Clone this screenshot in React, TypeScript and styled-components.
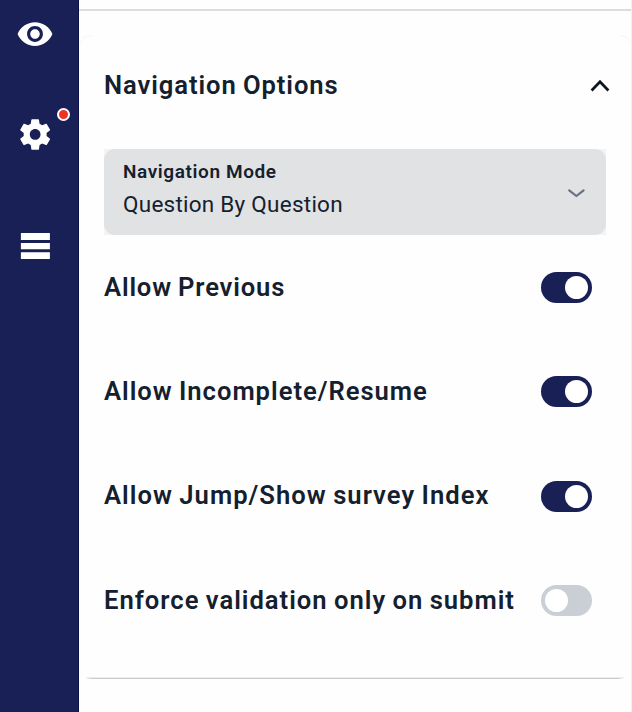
import React, { useState } from "react";
import styled, { createGlobalStyle } from "styled-components";

const NAVY = "#192056";
const INK = "#15202e";

const GlobalStyle = createGlobalStyle`
  * { box-sizing: border-box; }
  body { margin: 0; background: #fefefe; overflow: hidden; }
  button { border: 0; padding: 0; background: none; font: inherit; color: inherit; cursor: pointer; text-align: left; }
  svg { display: block; }
`;

const Page = styled.div`
  display: flex;
  width: 632px;
  height: 712px;
  overflow: hidden;
  font-family: Roboto, "Liberation Sans", sans-serif;
  color: ${INK};
`;

const Sidebar = styled.nav`
  width: 79px;
  flex: none;
  padding: 15px 8px 0 0;
  display: flex;
  flex-direction: column;
  align-items: center;
  background: ${NAVY};
  border-right: 1px solid #0b1048;
`;

const SideButton = styled.button<{ $gap?: number }>`
  position: relative;
  width: 38px;
  height: 38px;
  margin-bottom: ${(p) => p.$gap ?? 0}px;
  color: #fff;
`;

const Dot = styled.span`
  position: absolute;
  left: 41px;
  top: -7px;
  width: 13px;
  height: 13px;
  border-radius: 50%;
  border: 2px solid #fff;
  background: #f2311f;
`;

const Main = styled.main`
  flex: 1;
  min-width: 0;
  display: flex;
  flex-direction: column;
  border-right: 1px solid #f1f1f4;
`;

const TopRule = styled.div`
  height: 11px;
  flex: none;
  border-bottom: 2px solid #dcdcdc;
  margin-bottom: 24px;
`;

const CardCorners = styled.div`
  display: flex;
  justify-content: space-between;
  height: 10px;
  flex: none;
  padding: 0 0 0 1px;
`;

const Corner = styled.span<{ $side: "left" | "right" }>`
  width: 11px;
  height: 10px;
  border-top: 1px solid #f4f4f4;
  border-${(p) => p.$side}: 1px solid #f8f8f8;
  border-top-${(p) => p.$side}-radius: 11px;
`;

const Card = styled.section`
  height: 632px;
  flex: none;
  padding: 20px 17px 0;
  margin: 0 7px 0 8px;
  display: flex;
  flex-direction: column;
`;

const CardEdge = styled.div`
  height: 2px;
  flex: none;
  margin: 0 7px 0 7px;
  background: linear-gradient(to right, transparent, #cbcbcb 6px, #cbcbcb calc(100% - 6px), transparent);
  border-top: 1px solid #ededed;
`;

const CardHeader = styled.button`
  display: flex;
  align-items: center;
  justify-content: space-between;
  width: 506px;
  height: 42px;
  margin-bottom: 42px;
`;

const Label = styled.span<{ $spacing: number }>`
  padding-bottom: 2px;
  font-size: 25.6px;
  line-height: 30px;
  font-weight: 600;
  letter-spacing: ${(p) => p.$spacing}px;
  word-spacing: -1px;
  white-space: nowrap;
`;

const SelectFrame = styled.div`
  width: 502px;
  height: 86px;
  flex: none;
  background: #f4f4f4;
`;

const Select = styled.button`
  display: flex;
  align-items: center;
  justify-content: space-between;
  width: 100%;
  height: 100%;
  padding: 0 20px 0 19px;
  border-radius: 11px;
  background: #e1e2e4;
`;

const SelectText = styled.span`
  display: flex;
  flex-direction: column;
  white-space: nowrap;
  padding-bottom: 4px;
`;

const SelectCaption = styled.span`
  font-size: 19px;
  line-height: 28px;
  font-weight: 600;
  letter-spacing: 0.6px;
`;

const SelectValue = styled.span`
  font-size: 22.5px;
  line-height: 36px;
  font-weight: 400;
  letter-spacing: 0.25px;
`;

const Options = styled.div`
  padding-top: 37px;
  display: flex;
  flex-direction: column;
  gap: 73.4px;
`;

const OptionRow = styled.div`
  display: flex;
  align-items: center;
  justify-content: space-between;
  width: 488px;
  height: 31px;
`;

const Track = styled.button<{ $on: boolean }>`
  display: flex;
  align-items: center;
  justify-content: ${(p) => (p.$on ? "flex-end" : "flex-start")};
  width: 51.5px;
  height: 31px;
  flex: none;
  padding: 0 4px;
  border-radius: 16px;
  background: ${(p) => (p.$on ? NAVY : "#cacfd6")};
`;

const Knob = styled.span`
  width: 23px;
  height: 23px;
  border-radius: 50%;
  background: #fff;
`;

const EyeIcon = () => (
  <svg width="38" height="38" viewBox="0 0 24 24" fill="currentColor">
    <path d="M12 4.5C7 4.5 2.73 7.61 1 12c1.73 4.39 6 7.5 11 7.5s9.27-3.11 11-7.5c-1.73-4.39-6-7.5-11-7.5zM12 17c-2.76 0-5-2.24-5-5s2.24-5 5-5 5 2.24 5 5-2.24 5-5 5zm0-8c-1.66 0-3 1.34-3 3s1.34 3 3 3 3-1.34 3-3-1.34-3-3-3z" />
  </svg>
);

const GearIcon = () => (
  <svg width="38" height="38" viewBox="-0.5 -0.7 24.8 24.8" fill="currentColor">
    <path d="M19.43 12.98c.04-.32.07-.64.07-.98s-.03-.66-.07-.98l2.11-1.65c.19-.15.24-.42.12-.64l-2-3.46c-.12-.22-.39-.3-.61-.22l-2.49 1c-.52-.4-1.08-.73-1.69-.98l-.38-2.65C14.46 2.18 14.25 2 14 2h-4c-.25 0-.46.18-.49.42l-.38 2.65c-.61.25-1.17.59-1.69.98l-2.49-1c-.23-.09-.49 0-.61.22l-2 3.46c-.13.22-.07.49.12.64l2.11 1.65c-.04.32-.07.65-.07.98s.03.66.07.98l-2.11 1.65c-.19.15-.24.42-.12.64l2 3.46c.12.22.39.3.61.22l2.49-1c.52.4 1.08.73 1.69.98l.38 2.65c.03.24.24.42.49.42h4c.25 0 .46-.18.49-.42l.38-2.65c.61-.25 1.17-.59 1.69-.98l2.49 1c.23.09.49 0 .61-.22l2-3.46c.12-.22.07-.49-.12-.64l-2.11-1.65zM12 15.5c-1.93 0-3.5-1.57-3.5-3.5s1.57-3.5 3.5-3.5 3.5 1.57 3.5 3.5-1.57 3.5-3.5 3.5z" />
  </svg>
);

const BarsIcon = () => (
  <svg width="38" height="38" viewBox="0 0 38 38" fill="currentColor">
    <path d="M4.9 6h29v7h-29zM4.9 16h29v6.3h-29zM4.9 25.3h29v6.7h-29z" />
  </svg>
);

const ChevronUp = () => (
  <svg width="20" height="14" viewBox="0 0 20 14" fill="none" stroke="#0d151f" strokeWidth="2.7">
    <path d="M1.6 11.5 10 2.8l8.4 8.7" />
  </svg>
);

const ChevronDown = () => (
  <svg width="20" height="12" viewBox="0 0 20 12" fill="none" stroke="#66717f" strokeWidth="2.2" strokeLinecap="round" strokeLinejoin="round">
    <path d="M3.2 4.4 10.4 10l7.2-5.6" />
  </svg>
);

const initialOptions = [
  { label: "Allow Previous", spacing: 0.83, on: true },
  { label: "Allow Incomplete/Resume", spacing: 0.98, on: true },
  { label: "Allow Jump/Show survey Index", spacing: 1.03, on: true },
  { label: "Enforce validation only on submit", spacing: 1, on: false },
];

export default function App() {
  const [options, setOptions] = useState(initialOptions);
  const toggle = (i: number) =>
    setOptions((list) => list.map((o, n) => (n === i ? { ...o, on: !o.on } : o)));

  return (
    <>
      <GlobalStyle />
      <Page>
        <Sidebar>
          <SideButton $gap={62} aria-label="Preview"><EyeIcon /></SideButton>
          <SideButton $gap={74} aria-label="Settings"><GearIcon /><Dot /></SideButton>
          <SideButton aria-label="Menu"><BarsIcon /></SideButton>
        </Sidebar>
        <Main>
          <TopRule />
          <CardCorners>
            <Corner $side="left" />
            <Corner $side="right" />
          </CardCorners>
          <Card>
            <CardHeader>
              <Label $spacing={0.92}>Navigation Options</Label>
              <ChevronUp />
            </CardHeader>
            <SelectFrame>
              <Select>
                <SelectText>
                  <SelectCaption>Navigation Mode</SelectCaption>
                  <SelectValue>Question By Question</SelectValue>
                </SelectText>
                <ChevronDown />
              </Select>
            </SelectFrame>
            <Options>
              {options.map((o, i) => (
                <OptionRow key={o.label}>
                  <Label $spacing={o.spacing}>{o.label}</Label>
                  <Track $on={o.on} role="switch" aria-checked={o.on} aria-label={o.label} onClick={() => toggle(i)}>
                    <Knob />
                  </Track>
                </OptionRow>
              ))}
            </Options>
          </Card>
          <CardEdge />
        </Main>
      </Page>
    </>
  );
}
